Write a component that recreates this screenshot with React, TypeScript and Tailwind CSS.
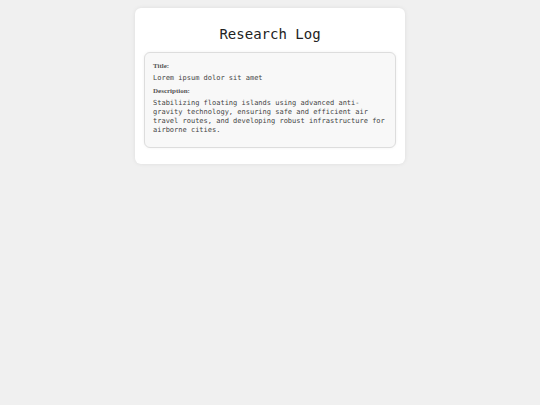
export default function App() {
  return (
    <div className="min-h-[405px] bg-[#f0f0f0] pt-2 font-['DejaVu_Sans_Mono',monospace]">
      <div className="mx-auto w-[270px] rounded-md bg-white px-[9px] pt-[17px] pb-[16px] shadow-[0_0_4px_rgba(0,0,0,0.08)]">
        <h1 className="text-center text-[14px] leading-[18px] text-[#222]">Research Log</h1>
        <div className="mt-[9px] rounded-md border border-[#dddddd] bg-[#f8f8f8] px-[8px] pt-[9px] pb-[12px] shadow-[0_0_3px_rgba(0,0,0,0.06)]">
          <p className="font-['Liberation_Serif',serif] text-[7px] font-bold leading-[9px] text-[#555]">Title:</p>
          <p className="mt-[3px] text-[7px] leading-[9px] text-[#444]">Lorem ipsum dolor sit amet</p>
          <p className="mt-[4px] font-['Liberation_Serif',serif] text-[7px] font-bold leading-[9px] text-[#555]">Description:</p>
          <p className="mt-[3px] text-[7px] leading-[9px] text-[#444]">
            Stabilizing floating islands using advanced anti-gravity technology, ensuring safe and efficient air travel routes, and developing robust infrastructure for airborne cities.
          </p>
        </div>
      </div>
    </div>
  )
}
